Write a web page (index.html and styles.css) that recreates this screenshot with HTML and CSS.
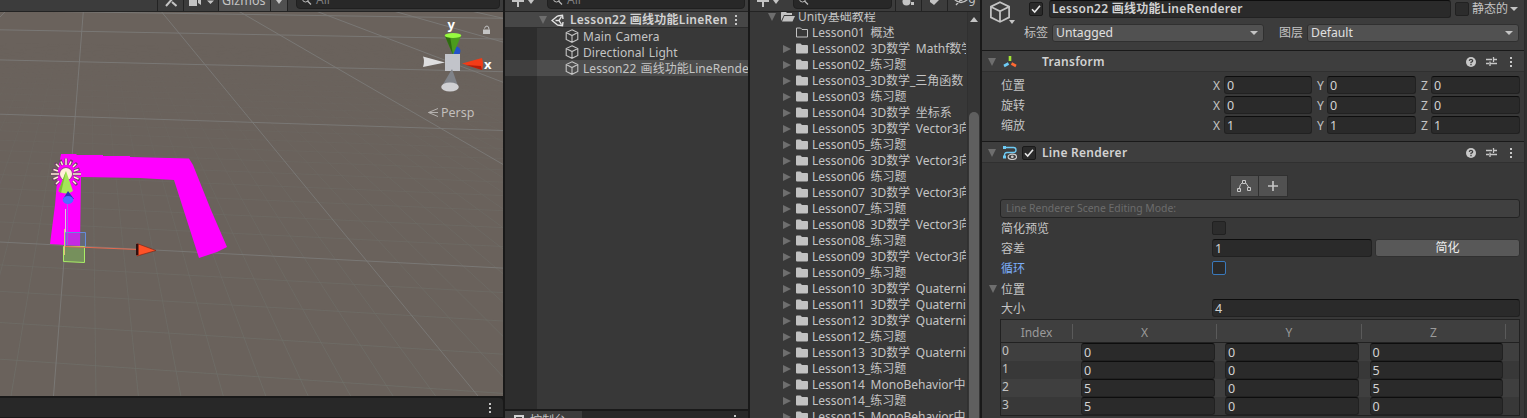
FILE: index.html
```html
<!DOCTYPE html>
<html lang="zh-CN">
<head>
<meta charset="utf-8">
<title>Lesson22 LineRenderer</title>
<link rel="stylesheet" href="styles.css">
</head>
<body>
<svg class="defs" width="0" height="0">
  <symbol id="cube" viewBox="0 0 14 14"><path d="M7 .8 12.8 3.6V10.4L7 13.3 1.2 10.4V3.6ZM1.2 3.6 7 6.6 12.8 3.6M7 6.6V13.3" fill="none" stroke="#c4c4c4" stroke-width="1.1"/></symbol>
  <symbol id="folder" viewBox="0 0 12 11"><path d="M0 1.5Q0 .5 1 .5H4.5L6 2H11Q12 2 12 3V9.5Q12 10.5 11 10.5H1Q0 10.5 0 9.5Z" fill="#c2c2c2"/></symbol>
  <symbol id="folder-empty" viewBox="0 0 12 11"><path d="M.5 1H4.5L6 2.5H11.5V10H.5Z" fill="none" stroke="#c2c2c2"/></symbol>
  <symbol id="folder-open" viewBox="0 0 14 11"><path d="M0 10V1.5L1 .5H4.5L6 2H11V4H3Z" fill="#c2c2c2"/><path d="M3.4 5H14L11.5 10.5H1Z" fill="#c2c2c2"/></symbol>
  <symbol id="plus" viewBox="0 0 12 12"><path d="M6 0V12M0 6H12" stroke="#c4c4c4" stroke-width="2"/></symbol>
  <symbol id="mag" viewBox="0 0 12 10"><circle cx="4.5" cy="4" r="3" fill="none" stroke="#bbb"/><path d="M6.5 6 10 9.5" stroke="#bbb" stroke-width="1.3"/></symbol>
  <symbol id="help" viewBox="0 0 10 10"><circle cx="5" cy="5" r="5" fill="#c8c8c8"/><path d="M3.3 3.8Q3.5 2.3 5 2.3T6.7 3.8Q6.7 4.6 5 5.3V6.2M5 7V8.2" fill="none" stroke="#3e3e3e" stroke-width="1.3"/></symbol>
  <symbol id="preset" viewBox="0 0 11 11"><path d="M0 3.5H6M7.5 3.5H11M7.5 1V6M0 7.5H3M4 7.5H11M4 5.5V10" fill="none" stroke="#c8c8c8" stroke-width="1.3"/></symbol>
  <symbol id="dots" viewBox="0 0 2 10"><path d="M0 0H2V2H0ZM0 4H2V6H0ZM0 8H2V10H0Z" fill="#c8c8c8"/></symbol>
  <symbol id="tick" viewBox="0 0 10 10"><path d="M1 5.3 3.7 8 9 1.8" fill="none" stroke="#e8e8e8" stroke-width="1.6"/></symbol>
</svg>
<main class="editor">
  <section class="scene">
    <div class="bar">
      <span class="tool tool-x"><svg width="12" height="12" viewBox="0 0 12 12"><path d="M1 11 9 2M2 1 5 4.500M7 7 11.500 11" stroke="#c4c4c4" stroke-width="2"/></svg></span>
      <span class="tool tool-cam"><svg width="25" height="12" viewBox="0 0 25 12"><path d="M0 1H8V11H0ZM9 5 12 2V10L9 8ZM18 5.500H25L21.500 9Z" fill="#c4c4c4"/></svg></span>
      <span class="tool giz">Gizmos</span>
      <span class="tool giz-arrow"><i class="down light"></i></span>
      <span class="search search-scene"><svg width="12" height="10"><use href="#mag"/></svg>All</span>
    </div>
    <svg class="view" width="503" height="384" viewBox="0 12 503 384">
      <defs>
        <linearGradient id="fadeV" x1="0" y1="12" x2="0" y2="396" gradientUnits="userSpaceOnUse"><stop offset=".08" stop-color="#fff" stop-opacity="0"/><stop offset=".55" stop-color="#fff" stop-opacity=".6"/><stop offset="1" stop-color="#fff"/></linearGradient>
        <mask id="fade" maskUnits="userSpaceOnUse" x="0" y="12" width="503" height="384"><rect y="12" width="503" height="384" fill="url(#fadeV)"/></mask>
      </defs>
      <g mask="url(#fade)"><path id="minor" class="minor"/></g>
      <path id="major" class="major"/>
      <path d="M61 154H76L77 155H103V156H130V157L189 158.500 193 165 211 210 227 247 217 252 199 258 182 205 174 180 140 178 81 177 80 246 50 244 55 205 58 170Z" fill="#f0f"/>
      <g>
        <path d="M65.500 209V246" stroke="#ddc3df"/><path d="M67.500 204V245" stroke="#a45cf5"/>
        <path d="M65.500 232.500H85.500V247H65.500Z" fill="#5a78b0" fill-opacity=".35" stroke="#668bdd"/>
        <path d="M63.500 246.500H84.500V262.500L63.500 261.500Z" fill="#76905c" stroke="#a9ee66"/>
        <path d="M64.500 229V255" stroke="#e6c07a"/>
        <path d="M65 246.500 138 249.500" stroke="#e56a50"/>
        <path d="M137 243.500 156 250.500 137 256Z" fill="#ff5228" stroke="#7a2010" stroke-width=".6"/><path d="M136 244H138.500V255H136Z" fill="#301010"/>
      </g>
      <g>
        <path d="M66 158.500V165M51 174H59M73 174H81M55 163 59 167M77 163 73 167M55 185 59 181M77 185 73 181M60 160 62.500 165M72 160 69.500 165M52.500 169 58 171M79.500 169 74 171M52.500 180 58 177M79.500 180 74 177" stroke="#70406a" stroke-width="3"/>
        <circle cx="66" cy="174" r="7" fill="#a5409a"/>
        <path d="M66 158.500V165M51 174H59M73 174H81M56 164 59 167M76 164 73 167M56 184 59 181M76 184 73 181M61 161.500 62.500 165M71 161.500 69.500 165M53.500 169.500 58 171M78.500 169.500 74 171M53.500 179 58 177M78.500 179 74 177" stroke="#fff0d8" stroke-width="1.500"/>
        <circle cx="66" cy="174" r="6" fill="#fff0d8"/>
        <path d="M66 171 73 191Q66 196 58.500 191Z" fill="#a5e758"/><path d="M66 171 61 193Q59 192 58.500 191Z" fill="#7dbd36"/>
        <path d="M68 191 74 199H63Z" fill="#2836b4"/><ellipse cx="68" cy="200" rx="5.300" ry="4" fill="#4f70ff"/>
      </g>
      <g>
        <circle cx="456" cy="51" r="4.500" fill="#2453ca"/>
        <path d="M445 36H461L453 55Z" fill="#4b9b1d"/><path d="M445 36H450L453 55Z" fill="#2f6a12"/><ellipse cx="453" cy="35.500" rx="8.300" ry="2.500" fill="#98fa40"/>
        <path d="M423 56.500Q425 61 423 67L445 62.500Z" fill="#dededf"/>
        <path d="M462 63.500 482 58Q484 64 482 70Z" fill="#f23c17"/><path d="M466 65 482 70 481 66Z" fill="#b41d08"/>
        <path d="M445 54H460V71H445Z" fill="#c2c4ca"/>
        <path d="M452 69 442 86H458Z" fill="#808389"/><ellipse cx="450" cy="87" rx="8.800" ry="4.500" fill="#d0d0d3"/>
        <path d="M483 29.500H490V34H483Z" fill="#c4c4c4"/><path d="M484.500 28.500Q485 26 487 26 489 26 489 29.500" fill="none" stroke="#c4c4c4"/>
        <path d="M438 108.500 428.500 112.500 438 116.500M428.500 112.500H438" fill="none" stroke="#b5b1ae"/>
        <text x="447.500" y="29" class="axis">y</text><text x="484" y="68.500" class="axis">x</text>
        <text x="441" y="117" class="persp">Persp</text>
      </g>
    </svg>
    <div class="scene-foot"><svg width="2" height="10"><use href="#dots"/></svg></div>
    <div class="scene-sub"></div>
  </section>

  <section class="hierarchy">
    <div class="bar bar-add">
      <svg width="12" height="12"><use href="#plus"/></svg><i class="down light"></i>
      <span class="search"><svg width="12" height="10"><use href="#mag"/></svg>All</span>
    </div>
    <div class="h-title"><i class="down"></i>
      <svg width="13" height="13" viewBox="0 0 13 13"><path d="M6.500 2 1 6.500 6.500 11M6.500 2 11.500 1.200 12 5M6.500 11 11.500 11.800 12 8M4.500 6.500H8L10.500 2.500M8 6.500 10.500 10.500" fill="none" stroke="#e4e4e4" stroke-width="1.400"/></svg>
      <b>Lesson22 画线功能LineRen</b><svg class="end" width="2" height="10"><use href="#dots"/></svg></div>
    <div class="h-body">
      <div class="h-row"><svg width="14" height="14"><use href="#cube"/></svg><span>Main Camera</span></div>
      <div class="h-row"><svg width="14" height="14"><use href="#cube"/></svg><span>Directional Light</span></div>
      <div class="h-row sel"><svg width="14" height="14"><use href="#cube"/></svg><span>Lesson22 画线功能LineRenderer</span></div>
    </div>
    <div class="h-foot"><span class="tab"><svg width="10" height="10" viewBox="0 0 10 10"><path d="M0 0H10V10H0Z" fill="#d2d2d2"/><path d="M2 2H8V3H2Z" fill="#3c3c3c"/></svg><span>控制台</span></span><svg class="end" width="2" height="10"><use href="#dots"/></svg></div>
  </section>

  <section class="project">
    <div class="bar bar-add">
      <svg width="12" height="12"><use href="#plus"/></svg><i class="down light"></i>
      <span class="search search-p"><svg width="12" height="10"><use href="#mag"/></svg></span>
      <span class="tool"><svg width="14" height="12" viewBox="0 0 14 12"><circle cx="4.500" cy="6.500" r="4" fill="#c4c4c4"/><path d="M8 0 12 5H8ZM9 7H12V10H9Z" fill="#c4c4c4"/></svg></span>
      <span class="tool"><svg width="12" height="12" viewBox="0 0 12 12"><path d="M1 5 6 0 11 4 5 10 1 7Z" fill="#c4c4c4"/></svg></span>
      <span class="tool eye"><svg width="16" height="12" viewBox="0 0 16 12"><path d="M1 5Q8-2 15 5 8 12 1 5M13 0 3 11" fill="none" stroke="#c4c4c4" stroke-width="1.300"/><circle cx="8" cy="5" r="2" fill="#c4c4c4"/></svg>9</span>
    </div>
    <div class="p-main">
      <div class="tree" id="tree">
        <div class="t-row root"><i class="down"></i><svg width="14" height="11"><use href="#folder-open"/></svg>Unity基础教程</div>
        <div class="t-row leaf"><svg width="12" height="11"><use href="#folder-empty"/></svg>Lesson01 概述</div>
      </div>
      <div class="scroll"><i class="up"></i><div class="thumb"></div></div>
    </div>
  </section>

  <section class="inspector">
    <div class="insp">
      <header class="go">
        <div class="go-icon"><svg width="22" height="24" viewBox="0 0 22 24"><use href="#cube" width="22" height="22"/></svg><i class="down light"></i></div>
        <div class="go-main">
          <div class="go-name"><span class="check"><svg width="10" height="10"><use href="#tick"/></svg></span><b class="field">Lesson22 画线功能LineRenderer</b><span class="check off"></span><span class="static">静态的</span><i class="down light"></i></div>
          <div class="go-tags"><span>标签</span><span class="drop">Untagged<i class="down light"></i></span><span class="lay">图层</span><span class="drop">Default<i class="down light"></i></span></div>
        </div>
      </header>
      <div class="comp"><i class="down"></i>
        <svg class="c-icon" width="14" height="14" viewBox="0 0 14 14"><path d="M7 1V6" stroke="#a3e635" stroke-width="2.600"/><path d="M1 11 5.500 8.500" stroke="#6ecbf5" stroke-width="2.600"/><path d="M13 11 8.500 8.500" stroke="#ff6a33" stroke-width="2.600"/></svg>
        <span class="c-check"></span><b>Transform</b>
        <span class="acts"><svg width="10" height="10"><use href="#help"/></svg><svg width="11" height="11"><use href="#preset"/></svg><svg width="2" height="10"><use href="#dots"/></svg></span></div>
      <div class="xyz">
        <span>位置</span><em>X</em><span class="field">0</span><em>Y</em><span class="field">0</span><em>Z</em><span class="field">0</span>
        <span>旋转</span><em>X</em><span class="field">0</span><em>Y</em><span class="field">0</span><em>Z</em><span class="field">0</span>
        <span>缩放</span><em>X</em><span class="field">1</span><em>Y</em><span class="field">1</span><em>Z</em><span class="field">1</span>
      </div>
      <div class="comp"><i class="down"></i>
        <svg class="c-icon" width="14" height="14" viewBox="0 0 14 14"><path d="M0 1.500H10.500Q13 1.500 13 4T10.500 6.500H4Q1.500 6.500 1.500 9V10.500" fill="none" stroke="#6ecbf5" stroke-width="1.300"/><path d="M0 0H3V3H0ZM0 9.500H3V12.500H0Z" fill="#6ecbf5"/><ellipse cx="9.300" cy="10.800" rx="4.200" ry="2.700" fill="none" stroke="#ccc" stroke-width="1.200"/><circle cx="9.300" cy="10.800" r="1.400" fill="#ccc"/></svg>
        <span class="c-check"><span class="check"><svg width="10" height="10"><use href="#tick"/></svg></span></span><b>Line Renderer</b>
        <span class="acts"><svg width="10" height="10"><use href="#help"/></svg><svg width="11" height="11"><use href="#preset"/></svg><svg width="2" height="10"><use href="#dots"/></svg></span></div>
      <div class="line">
        <div class="modes"><span><svg width="14" height="12" viewBox="0 0 14 12"><path d="M2 9.500Q3 3.500 5.500 2.500M8.500 2.500 11.500 7" fill="none" stroke="#c8c8c8"/><path d="M5.500.5H8.500V3.500H5.500ZM.5 8.500H3.500V11.500H.5ZM10.500 7.500H13.500V10.500H10.500Z" fill="none" stroke="#c8c8c8"/></svg></span><span><svg width="10" height="10" viewBox="0 0 12 12"><use href="#plus"/></svg></span></div>
        <div class="help">Line Renderer Scene Editing Mode:</div>
        <div class="prop"><span>简化预览</span><span class="check off"></span></div>
        <div class="prop"><span>容差</span><span class="field tol">1</span><span class="button">简化</span></div>
        <div class="prop"><span class="blue">循环</span><span class="check focus"></span></div>
        <div class="prop fold"><i class="down"></i><span>位置</span></div>
        <div class="prop size"><span>大小</span><span class="field">4</span></div>
        <div class="table">
          <div class="t-head"><span>Index</span><span>X</span><span>Y</span><span>Z</span></div>
          <div class="t-line"><span>0</span><span class="field">0</span><span class="field">0</span><span class="field">0</span></div>
          <div class="t-line"><span>1</span><span class="field">0</span><span class="field">0</span><span class="field">5</span></div>
          <div class="t-line"><span>2</span><span class="field">5</span><span class="field">0</span><span class="field">5</span></div>
          <div class="t-line"><span>3</span><span class="field">5</span><span class="field">0</span><span class="field">0</span></div>
        </div>
      </div>
    </div>
  </section>
</main>
<script src="main.js"></script>
</body>
</html>
```

FILE: styles.css
```css
* { box-sizing: border-box; }
body { margin: 0; background: #191919; color: #c4c4c4; font: 12px/16px "Noto Sans", "Noto Sans CJK SC", sans-serif; overflow: hidden; }
svg { display: block; flex: none; }
.defs { position: absolute; }
b { font-weight: 600; color: #d2d2d2; letter-spacing: .27px; }
.editor { display: grid; grid-template-columns: 503px 243px 230px 545px; column-gap: 2px; height: 418px; white-space: nowrap; }
.editor > section { display: flex; flex-direction: column; min-width: 0; height: 418px; overflow: hidden; }

.down, .up { flex: none; width: 0; height: 0; border: 4.5px solid transparent; border-bottom: 0; border-top: 8px solid #6e6e6e; }
.down.light { border-width: 4px 3.5px 0; border-top-color: #c4c4c4; }
.up { border: 4px solid transparent; border-top: 0; border-bottom: 5px solid #c4c4c4; }

/* toolbars */
.bar { flex: none; height: 12px; display: flex; align-items: flex-end; background: #3c3c3c; border-bottom: 1px solid #232323; overflow: hidden; }
.tool { height: 20px; display: flex; align-items: flex-end; justify-content: center; border-left: 1px solid #232323; padding-bottom: 4px; }
.tool-x { margin-left: 157px; width: 26px; }
.tool-cam { width: 35px; }
.giz { width: 52px; background: #505050; padding: 0 0 2px 3px; justify-content: flex-start; font-size: 12.5px; }
.giz-arrow { width: 18px; background: #505050; border-right: 1px solid #232323; padding-bottom: 7px; }
.search { height: 21px; display: flex; align-items: flex-end; gap: 3px; padding: 0 0 0 4px; background: #282828; border: 1px solid #202020; border-radius: 4px; color: #7e7e7e; margin: 0 3px 2px 7px; flex: 1; }
.search svg { margin-bottom: 3px; }
.search-scene { margin: 0 3px 2px 8px; }
.bar-add { padding-left: 7px; gap: 4px; }
.bar-add > svg { margin-bottom: 4px; }
.bar-add > .down { margin-bottom: 7px; }
.bar-add .search { margin-left: 9px; }

/* scene */
.scene { background: #191919; }
.view { background: #6a625c; }
.minor { fill: none; stroke: #70716b; stroke-width: 1; opacity: .65; }
.major { fill: none; stroke: #7b7a78; stroke-width: 1; opacity: .9; }
.axis { font: 700 13px "Noto Sans", sans-serif; fill: #fff; }
.persp { font: 12.5px "Noto Sans", sans-serif; fill: #c3bfbc; }
.scene-foot { height: 19px; margin-top: 2px; background: #282828; border-radius: 0 4px 0 0; display: flex; align-items: center; justify-content: flex-end; padding-right: 12px; flex: none; }
.scene-sub { flex: 1; background: #3c3c3c; border-top: 1px solid #191919; }

/* hierarchy */
.h-title { flex: none; height: 16px; display: flex; align-items: center; background: #474747; border-bottom: 1px solid #2c2c2c; padding: 1px 11px 0 34px; }
.h-title b { margin-left: 6px; }
.h-title .down + svg { margin-left: 4px; }
.end { margin-left: auto; }
.h-body { flex: 1; background: linear-gradient(90deg, #2d2d2d 32px, #383838 32px); overflow: hidden; }
.h-row { height: 16px; display: flex; align-items: center; gap: 3px; padding-left: 60px; letter-spacing: .06px; word-spacing: 1px; }
.h-row span { padding-top: 2px; margin-left: 1px; }
.h-row.sel { background: linear-gradient(90deg, #3f3f3f 32px, #4d4d4d 32px); }
.h-foot { flex: none; height: 9px; border-top: 2px solid #191919; background: #282828; display: flex; align-items: flex-start; padding-right: 12px; overflow: hidden; }
.h-foot > .end { margin-top: 4px; }
.tab { display: flex; gap: 6px; width: 77px; height: 20px; background: #3c3c3c; padding: 4px 0 0 9px; }
.tab > span { margin-top: -2px; }

/* project */
.p-main { flex: 1; display: flex; background: #383838; min-height: 0; }
.tree { flex: 1; min-width: 0; overflow: hidden; margin-right: 1px; }
.t-row { height: 16px; display: flex; align-items: center; padding-left: 33px; overflow: hidden; word-spacing: 2.5px; }
.t-row svg { margin: 0 4px 2px 5px; }
.t-row.leaf svg { margin-left: 13px; }
.t-row.root { margin-top: -3px; padding-left: 18px; }
.t-row.root svg { margin-right: 3px; }
.right { flex: none; width: 0; border: 4px solid transparent; border-right: 0; border-left: 8px solid #6e6e6e; }
.scroll { width: 13px; background: #353535; border-left: 1px solid #303030; display: flex; flex-direction: column; align-items: center; padding-top: 5px; }
.thumb { width: 10px; flex: 1; margin-top: 90px; background: #5f5f5f; border-radius: 5px 5px 0 0; }
.project .bar .tool { width: 26px; flex: none; padding-bottom: 4px; }
.project .bar .eye { width: 33px; padding-bottom: 1px; }
.project .eye svg { margin-bottom: 4px; }
.project .bar { gap: 0; }
.project .bar .down { margin-left: 4px; }
.project .search { margin-left: 14px; }

/* inspector */
.insp { width: 543px; height: 418px; background: #383838; border-right: 1px solid #2b2b2b; }
.inspector { background: #303030; }
.field { height: 18px; line-height: 17px; background: #2a2a2a; border: 1px solid #212121; border-top-color: #0d0d0d; border-radius: 3px; padding-left: 2px; color: #d2d2d2; overflow: hidden; font-size: 12.5px; }
.check { flex: none; width: 14px; height: 14px; background: #2a2a2a; border: 1px solid #191919; border-radius: 2px; display: flex; align-items: center; justify-content: center; }
.check.off { background: #2c2c2c; border-color: #212121; }
.check.focus { border-color: #3a79bb; }
.go { height: 51px; background: #3c3c3c; border-bottom: 1px solid #191919; display: flex; }
.go-icon { width: 42px; padding: 1px 0 0 7px; }
.go-icon .down { margin: -3px 0 0 20px; }
.go-name { display: flex; align-items: center; height: 18px; padding-left: 5px; }
.go-name .field { width: 402px; margin: 0 4px 0 6px; font-size: 12px; line-height: 16px; }
.static { margin: 0 2px 0 3px; }
.go-tags { display: flex; align-items: center; margin-top: 6px; }
.drop { width: 212px; height: 18px; margin-left: 4px; padding: 0 5px 1px 3px; background: #515151; border: 1px solid #303030; border-radius: 3px; display: flex; align-items: center; justify-content: space-between; color: #e0e0e0; font-size: 12.2px; }
.drop .down, .go-name .down { border-width: 4.5px 4px 0; }
.lay { margin-left: 15px; }
.comp { height: 21px; background: #3e3e3e; border-bottom: 1px solid #303030; display: flex; align-items: center; padding: 1px 12px 0 6px; }
.comp b { padding-top: 1px; }
.c-icon { margin-left: 7px; }
.c-check { width: 25px; padding-left: 5px; }
.acts { margin-left: auto; display: flex; align-items: center; gap: 10px; }
.acts svg:last-child { margin-left: 3px; }
.xyz { display: grid; grid-template-columns: 212px 11px 88px 15px 89px 15px 89px; grid-auto-rows: 18px; row-gap: 2px; padding: 4px 0 7px 19px; border-bottom: 1px solid #191919; height: 70px; }
.xyz > :not(.field) { line-height: 19px; }
.xyz em { font-style: normal; }
.xyz em:not(:nth-of-type(3n+1)) { padding-left: 5px; }
.line { padding: 12px 4px 0 18px; }
.modes { display: flex; justify-content: center; padding-right: 3px; }
.modes span { height: 22px; width: 29px; background: #515151; border: 1px solid #303030; display: flex; align-items: center; justify-content: center; padding-bottom: 1px; }
.modes span + span { border-left: 0; }
.help { margin-top: 2px; height: 19px; border: 1px solid #232323; border-radius: 3px; background: #404040; color: #6c6c6c; font-size: 10.4px; line-height: 17px; padding-left: 5px; }
.prop { display: grid; grid-template-columns: 211px 160px 1fr; height: 20px; align-items: center; padding-left: 1px; }
.prop > span:first-child, .fold > span { padding-top: 1px; }
.prop .button { margin-left: 3px; }
.blue { color: #7baefa; }
.button { height: 18px; background: #585858; border: 1px solid #303030; border-radius: 3px; text-align: center; color: #eee; }
.fold { display: flex; margin-left: -12px; gap: 4px; margin-top: 1px; }
.prop.size { grid-template-columns: 211px 1fr; margin-top: -1px; }
.table { margin-top: 1px; border: 1px solid #212121; height: 97px; }
.t-head { height: 23px; display: grid; grid-template-columns: 72px 144px 145px 144px; align-items: center; background: #3f3f3f; border-bottom: 1px solid #212121; color: #9a9a9a; text-align: center; }
.t-head span { height: 15px; line-height: 17px; border-right: 1px solid #5a5a5a; }
.t-line { display: grid; grid-template-columns: 69.5px 133.5px 134px 133.5px; column-gap: 10.5px; height: 18px; background: #3f3f3f; }
.t-line > :first-child { padding-left: 1px; }
.t-line:nth-child(odd) { background: #383838; }
```

FILE: main.js
```js
// Perspective ground grid: columns meet at a vanishing point, rows are spaced by inverse depth.
const VX = 90, VY = -75;
let minor = '', major = '';
for (let i = -12; i <= 60; i++) {
  const d = `M${VX} ${VY}L${(53.5 + 42.45 * i).toFixed(1)} 396`;
  if (i % 10 === 0) major += d; else if (i < 36) minor += d;
}
for (let k = -5; k <= 60; k++) {
  const l = VY + 1 / (0.003155 + 0.000213 * k);
  const r = VY + 1 / (0.002915 + 0.000195 * k);
  const d = `M0 ${l.toFixed(1)}L503 ${r.toFixed(1)}`;
  if (k % 10 === 0) major += d; else if (k < 26) minor += d;
}
document.getElementById('minor').setAttribute('d', minor);
document.getElementById('major').setAttribute('d', major);

const lessons = [
  '02 3D数学 Mathf数学', '02_练习题', '03_3D数学_三角函数', '03 练习题', '04 3D数学 坐标系',
  '05 3D数学 Vector3向量', '05_练习题', '06 3D数学 Vector3向量', '06 练习题', '07 3D数学 Vector3向量',
  '07_练习题', '08 3D数学 Vector3向量', '08_练习题', '09 3D数学 Vector3向量', '09_练习题',
  '10 3D数学 Quaternion', '11 3D数学 Quaternion', '12 3D数学 Quaternion', '12_练习题',
  '13 3D数学 Quaternion', '13_练习题', '14 MonoBehavior中', '14_练习题', '15 MonoBehavior中'
];
document.getElementById('tree').insertAdjacentHTML('beforeend', lessons.map(n =>
  `<div class="t-row"><i class="right"></i><svg width="12" height="11"><use href="#folder"/></svg>Lesson${n}</div>`).join(''));
```
